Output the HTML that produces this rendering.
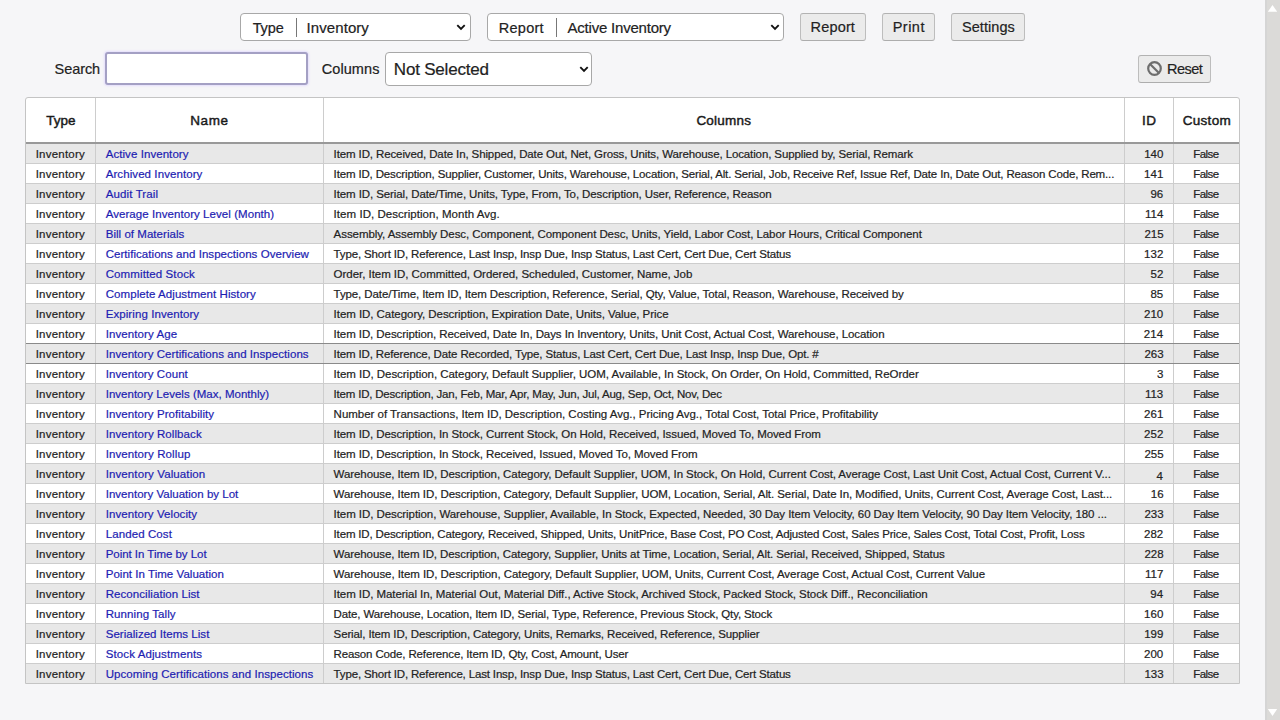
<!DOCTYPE html><html><head><meta charset="utf-8"><style>
*{box-sizing:border-box;margin:0;padding:0}
html,body{width:1280px;height:720px;overflow:hidden;background:#f6f6f8;font-family:"Liberation Sans",sans-serif;color:#222}
.abs{position:absolute}
.ctl{position:absolute;background:#fff;border:1px solid #a8a8a8;border-radius:4px}
.btn{position:absolute;background:#ebebeb;border:1px solid;border-color:#b2b2b2 #bdbdbd #adadad #bdbdbd;border-radius:3px}
.tx{position:absolute;white-space:nowrap;line-height:1;-webkit-text-stroke:0.2px currentColor}
.sb{position:absolute;left:1265px;top:0;width:15px;height:720px;background:#dbdad8;border-left:2px solid #d5d5d5}
.tbl{position:absolute;left:25px;top:97px;width:1215px;height:587px;background:#fff;border:1px solid #c4c4c4;border-radius:3px 3px 0 0;overflow:hidden}
.r{position:absolute;left:0;width:1213px;height:20px;border-bottom:1px solid #cdcdcd}
.g{background:#e8e8e8}
.vl{position:absolute;top:0;width:1px;height:586px;background:#cdcdcd}
</style></head><body>
<div class="ctl" style="left:240px;top:13px;width:231px;height:28px"></div>
<div class="abs" style="left:296px;top:18px;width:1px;height:19px;background:#777"></div>
<svg class="abs" style="left:456px;top:23.6px" width="11" height="7" viewBox="0 0 11 7"><path d="M1.3 1.2 L5 4.9 L8.7 1.2" fill="none" stroke="#111" stroke-width="1.9"/></svg>
<div class="ctl" style="left:487px;top:13px;width:297px;height:28px"></div>
<div class="abs" style="left:556px;top:18px;width:1px;height:19px;background:#777"></div>
<svg class="abs" style="left:769.5px;top:23.6px" width="11" height="7" viewBox="0 0 11 7"><path d="M1.3 1.2 L5 4.9 L8.7 1.2" fill="none" stroke="#111" stroke-width="1.9"/></svg>
<div class="btn" style="left:800px;top:13px;width:66px;height:28px"></div>
<div class="btn" style="left:882px;top:13px;width:53px;height:28px"></div>
<div class="btn" style="left:951px;top:13px;width:74px;height:28px"></div>
<div class="ctl" style="left:105px;top:52.3px;width:202.8px;height:32.9px;border:2px solid #a4a0c4;border-radius:3px;box-shadow:0 0 2px 1px rgba(215,205,255,.6)"></div>
<div class="ctl" style="left:385px;top:52px;width:207px;height:34px"></div>
<svg class="abs" style="left:578.5px;top:65.5px" width="11" height="7" viewBox="0 0 11 7"><path d="M1.3 1.2 L5 4.9 L8.7 1.2" fill="none" stroke="#111" stroke-width="1.9"/></svg>
<div class="btn" style="left:1138px;top:55px;width:73px;height:28px"></div>
<svg class="abs" style="left:1146px;top:60px" width="17" height="17" viewBox="0 0 17 17"><circle cx="8.5" cy="8.5" r="6.3" fill="none" stroke="#6e6e6e" stroke-width="2.2"/><path d="M4 4 L13 13" stroke="#6e6e6e" stroke-width="2.2"/></svg>
<div class="tbl">
<div class="r g" style="top:46px"></div>
<div class="r" style="top:66px"></div>
<div class="r g" style="top:86px"></div>
<div class="r" style="top:106px"></div>
<div class="r g" style="top:126px"></div>
<div class="r" style="top:146px"></div>
<div class="r g" style="top:166px"></div>
<div class="r" style="top:186px"></div>
<div class="r g" style="top:206px"></div>
<div class="r" style="top:226px"></div>
<div class="r g" style="top:246px"></div>
<div class="r" style="top:266px"></div>
<div class="r g" style="top:286px"></div>
<div class="r" style="top:306px"></div>
<div class="r g" style="top:326px"></div>
<div class="r" style="top:346px"></div>
<div class="r g" style="top:366px"></div>
<div class="r" style="top:386px"></div>
<div class="r g" style="top:406px"></div>
<div class="r" style="top:426px"></div>
<div class="r g" style="top:446px"></div>
<div class="r" style="top:466px"></div>
<div class="r g" style="top:486px"></div>
<div class="r" style="top:506px"></div>
<div class="r g" style="top:526px"></div>
<div class="r" style="top:546px"></div>
<div class="r g" style="top:566px"></div>
<div class="vl" style="left:69px"></div>
<div class="vl" style="left:297px"></div>
<div class="vl" style="left:1098px"></div>
<div class="vl" style="left:1147px"></div>
<div class="abs" style="left:0;top:44px;width:1213px;height:2px;background:#999"></div>
<div class="abs" style="left:-1px;top:245px;width:1215px;height:21px;border:1px solid #8a8a8a"></div>
</div>
<div class="tx" id="t_type" style="left:252.66px;top:21.01px;font-size:14.5px;color:#222;letter-spacing:-0.099px;">Type</div>
<div class="tx" id="t_inv" style="left:306.58px;top:20.05px;font-size:15px;color:#222;letter-spacing:0.073px;">Inventory</div>
<div class="tx" id="t_rep" style="left:498.76px;top:21.01px;font-size:14.5px;color:#222;letter-spacing:0.266px;">Report</div>
<div class="tx" id="t_act" style="left:567.45px;top:20.05px;font-size:15px;color:#222;letter-spacing:-0.202px;">Active Inventory</div>
<div class="tx" id="b_rep" style="left:810.61px;top:20.31px;font-size:14.5px;color:#222;letter-spacing:0.151px;">Report</div>
<div class="tx" id="b_pri" style="left:892.68px;top:19.51px;font-size:14.5px;color:#222;letter-spacing:0.487px;">Print</div>
<div class="tx" id="b_set" style="left:961.95px;top:19.91px;font-size:14.5px;color:#222;letter-spacing:0.063px;">Settings</div>
<div class="tx" id="l_sea" style="left:54.58px;top:61.86px;font-size:14.5px;color:#222;letter-spacing:-0.071px;">Search</div>
<div class="tx" id="l_col" style="left:321.67px;top:62.06px;font-size:14.5px;color:#222;letter-spacing:0.098px;">Columns</div>
<div class="tx" id="s_not" style="left:393.82px;top:61.05px;font-size:17px;color:#222;letter-spacing:-0.203px;">Not Selected</div>
<div class="tx" id="b_res" style="left:1167.12px;top:62.01px;font-size:14.5px;color:#222;letter-spacing:-0.539px;">Reset</div>
<div class="tx" id="h_type" style="left:46.24px;top:114.26px;font-size:13.5px;color:#1a1a1a;-webkit-text-stroke:0.45px #1a1a1a;letter-spacing:-0.022px;">Type</div>
<div class="tx" id="h_name" style="left:190.21px;top:114.26px;font-size:13.5px;color:#1a1a1a;-webkit-text-stroke:0.45px #1a1a1a;letter-spacing:0.623px;">Name</div>
<div class="tx" id="h_cols" style="left:696.40px;top:114.26px;font-size:13.5px;color:#1a1a1a;-webkit-text-stroke:0.45px #1a1a1a;letter-spacing:0.223px;">Columns</div>
<div class="tx" id="h_id" style="left:1142.11px;top:114.26px;font-size:13.5px;color:#1a1a1a;-webkit-text-stroke:0.45px #1a1a1a;letter-spacing:0.417px;">ID</div>
<div class="tx" id="h_cus" style="left:1182.72px;top:114.26px;font-size:13.5px;color:#1a1a1a;-webkit-text-stroke:0.45px #1a1a1a;letter-spacing:0.289px;">Custom</div>
<div class="tx" id="r0_t" style="left:35.69px;top:149.36px;font-size:11.5px;color:#222;letter-spacing:0.218px;">Inventory</div>
<div class="tx" id="r0_n" style="left:105.70px;top:149.36px;font-size:11.5px;color:#1d1db2;letter-spacing:0.066px;">Active Inventory</div>
<div class="tx" id="r0_c" style="left:333.60px;top:149.36px;font-size:11.5px;color:#222;letter-spacing:-0.116px;">Item ID, Received, Date In, Shipped, Date Out, Net, Gross, Units, Warehouse, Location, Supplied by, Serial, Remark</div>
<div class="tx" id="r0_i" style="left:1144.14px;top:149.36px;font-size:11.5px;color:#222;">140</div>
<div class="tx" id="r0_f" style="left:1193.24px;top:149.36px;font-size:11.5px;color:#222;letter-spacing:-0.530px;">False</div>
<div class="tx" id="r1_t" style="left:35.69px;top:169.36px;font-size:11.5px;color:#222;letter-spacing:0.218px;">Inventory</div>
<div class="tx" id="r1_n" style="left:105.70px;top:169.36px;font-size:11.5px;color:#1d1db2;letter-spacing:0.083px;">Archived Inventory</div>
<div class="tx" id="r1_c" style="left:333.60px;top:169.36px;font-size:11.5px;color:#222;letter-spacing:-0.150px;">Item ID, Description, Supplier, Customer, Units, Warehouse, Location, Serial, Alt. Serial, Job, Receive Ref, Issue Ref, Date In, Date Out, Reason Code, Rem...</div>
<div class="tx" id="r1_i" style="left:1144.12px;top:169.36px;font-size:11.5px;color:#222;">141</div>
<div class="tx" id="r1_f" style="left:1193.24px;top:169.36px;font-size:11.5px;color:#222;letter-spacing:-0.530px;">False</div>
<div class="tx" id="r2_t" style="left:35.69px;top:189.36px;font-size:11.5px;color:#222;letter-spacing:0.218px;">Inventory</div>
<div class="tx" id="r2_n" style="left:105.70px;top:189.36px;font-size:11.5px;color:#1d1db2;letter-spacing:0.127px;">Audit Trail</div>
<div class="tx" id="r2_c" style="left:333.60px;top:189.36px;font-size:11.5px;color:#222;letter-spacing:-0.098px;">Item ID, Serial, Date/Time, Units, Type, From, To, Description, User, Reference, Reason</div>
<div class="tx" id="r2_i" style="left:1150.48px;top:189.36px;font-size:11.5px;color:#222;">96</div>
<div class="tx" id="r2_f" style="left:1193.24px;top:189.36px;font-size:11.5px;color:#222;letter-spacing:-0.530px;">False</div>
<div class="tx" id="r3_t" style="left:35.69px;top:209.36px;font-size:11.5px;color:#222;letter-spacing:0.218px;">Inventory</div>
<div class="tx" id="r3_n" style="left:105.70px;top:209.36px;font-size:11.5px;color:#1d1db2;letter-spacing:0.061px;">Average Inventory Level (Month)</div>
<div class="tx" id="r3_c" style="left:333.60px;top:209.36px;font-size:11.5px;color:#222;letter-spacing:0.046px;">Item ID, Description, Month Avg.</div>
<div class="tx" id="r3_i" style="left:1145.01px;top:209.36px;font-size:11.5px;color:#222;">114</div>
<div class="tx" id="r3_f" style="left:1193.24px;top:209.36px;font-size:11.5px;color:#222;letter-spacing:-0.530px;">False</div>
<div class="tx" id="r4_t" style="left:35.69px;top:229.36px;font-size:11.5px;color:#222;letter-spacing:0.218px;">Inventory</div>
<div class="tx" id="r4_n" style="left:105.70px;top:229.36px;font-size:11.5px;color:#1d1db2;letter-spacing:0.037px;">Bill of Materials</div>
<div class="tx" id="r4_c" style="left:333.60px;top:229.36px;font-size:11.5px;color:#222;letter-spacing:-0.067px;">Assembly, Assembly Desc, Component, Component Desc, Units, Yield, Labor Cost, Labor Hours, Critical Component</div>
<div class="tx" id="r4_i" style="left:1144.40px;top:229.36px;font-size:11.5px;color:#222;">215</div>
<div class="tx" id="r4_f" style="left:1193.24px;top:229.36px;font-size:11.5px;color:#222;letter-spacing:-0.530px;">False</div>
<div class="tx" id="r5_t" style="left:35.69px;top:249.36px;font-size:11.5px;color:#222;letter-spacing:0.218px;">Inventory</div>
<div class="tx" id="r5_n" style="left:105.70px;top:249.36px;font-size:11.5px;color:#1d1db2;letter-spacing:0.050px;">Certifications and Inspections Overview</div>
<div class="tx" id="r5_c" style="left:333.60px;top:249.36px;font-size:11.5px;color:#222;letter-spacing:-0.156px;">Type, Short ID, Reference, Last Insp, Insp Due, Insp Status, Last Cert, Cert Due, Cert Status</div>
<div class="tx" id="r5_i" style="left:1144.12px;top:249.36px;font-size:11.5px;color:#222;">132</div>
<div class="tx" id="r5_f" style="left:1193.24px;top:249.36px;font-size:11.5px;color:#222;letter-spacing:-0.530px;">False</div>
<div class="tx" id="r6_t" style="left:35.69px;top:269.36px;font-size:11.5px;color:#222;letter-spacing:0.218px;">Inventory</div>
<div class="tx" id="r6_n" style="left:105.70px;top:269.36px;font-size:11.5px;color:#1d1db2;letter-spacing:0.111px;">Committed Stock</div>
<div class="tx" id="r6_c" style="left:333.60px;top:269.36px;font-size:11.5px;color:#222;letter-spacing:-0.037px;">Order, Item ID, Committed, Ordered, Scheduled, Customer, Name, Job</div>
<div class="tx" id="r6_i" style="left:1150.56px;top:269.36px;font-size:11.5px;color:#222;">52</div>
<div class="tx" id="r6_f" style="left:1193.24px;top:269.36px;font-size:11.5px;color:#222;letter-spacing:-0.530px;">False</div>
<div class="tx" id="r7_t" style="left:35.69px;top:289.36px;font-size:11.5px;color:#222;letter-spacing:0.218px;">Inventory</div>
<div class="tx" id="r7_n" style="left:105.70px;top:289.36px;font-size:11.5px;color:#1d1db2;letter-spacing:0.068px;">Complete Adjustment History</div>
<div class="tx" id="r7_c" style="left:333.60px;top:289.36px;font-size:11.5px;color:#222;letter-spacing:-0.102px;">Type, Date/Time, Item ID, Item Description, Reference, Serial, Qty, Value, Total, Reason, Warehouse, Received by</div>
<div class="tx" id="r7_i" style="left:1150.40px;top:289.36px;font-size:11.5px;color:#222;">85</div>
<div class="tx" id="r7_f" style="left:1193.24px;top:289.36px;font-size:11.5px;color:#222;letter-spacing:-0.530px;">False</div>
<div class="tx" id="r8_t" style="left:35.69px;top:309.36px;font-size:11.5px;color:#222;letter-spacing:0.218px;">Inventory</div>
<div class="tx" id="r8_n" style="left:105.70px;top:309.36px;font-size:11.5px;color:#1d1db2;letter-spacing:0.078px;">Expiring Inventory</div>
<div class="tx" id="r8_c" style="left:333.60px;top:309.36px;font-size:11.5px;color:#222;letter-spacing:-0.050px;">Item ID, Category, Description, Expiration Date, Units, Value, Price</div>
<div class="tx" id="r8_i" style="left:1144.08px;top:309.36px;font-size:11.5px;color:#222;">210</div>
<div class="tx" id="r8_f" style="left:1193.24px;top:309.36px;font-size:11.5px;color:#222;letter-spacing:-0.530px;">False</div>
<div class="tx" id="r9_t" style="left:35.69px;top:329.36px;font-size:11.5px;color:#222;letter-spacing:0.218px;">Inventory</div>
<div class="tx" id="r9_n" style="left:105.70px;top:329.36px;font-size:11.5px;color:#1d1db2;letter-spacing:0.101px;">Inventory Age</div>
<div class="tx" id="r9_c" style="left:333.60px;top:329.36px;font-size:11.5px;color:#222;letter-spacing:-0.076px;">Item ID, Description, Received, Date In, Days In Inventory, Units, Unit Cost, Actual Cost, Warehouse, Location</div>
<div class="tx" id="r9_i" style="left:1143.86px;top:329.36px;font-size:11.5px;color:#222;">214</div>
<div class="tx" id="r9_f" style="left:1193.24px;top:329.36px;font-size:11.5px;color:#222;letter-spacing:-0.530px;">False</div>
<div class="tx" id="r10_t" style="left:35.69px;top:349.36px;font-size:11.5px;color:#222;letter-spacing:0.218px;">Inventory</div>
<div class="tx" id="r10_n" style="left:105.70px;top:349.36px;font-size:11.5px;color:#1d1db2;letter-spacing:0.056px;">Inventory Certifications and Inspections</div>
<div class="tx" id="r10_c" style="left:333.60px;top:349.36px;font-size:11.5px;color:#222;letter-spacing:-0.144px;">Item ID, Reference, Date Recorded, Type, Status, Last Cert, Cert Due, Last Insp, Insp Due, Opt. #</div>
<div class="tx" id="r10_i" style="left:1144.47px;top:349.36px;font-size:11.5px;color:#222;">263</div>
<div class="tx" id="r10_f" style="left:1193.24px;top:349.36px;font-size:11.5px;color:#222;letter-spacing:-0.530px;">False</div>
<div class="tx" id="r11_t" style="left:35.69px;top:369.36px;font-size:11.5px;color:#222;letter-spacing:0.218px;">Inventory</div>
<div class="tx" id="r11_n" style="left:105.70px;top:369.36px;font-size:11.5px;color:#1d1db2;letter-spacing:0.065px;">Inventory Count</div>
<div class="tx" id="r11_c" style="left:333.60px;top:369.36px;font-size:11.5px;color:#222;letter-spacing:-0.033px;">Item ID, Description, Category, Default Supplier, UOM, Available, In Stock, On Order, On Hold, Committed, ReOrder</div>
<div class="tx" id="r11_i" style="left:1157.02px;top:369.36px;font-size:11.5px;color:#222;">3</div>
<div class="tx" id="r11_f" style="left:1193.24px;top:369.36px;font-size:11.5px;color:#222;letter-spacing:-0.530px;">False</div>
<div class="tx" id="r12_t" style="left:35.69px;top:389.36px;font-size:11.5px;color:#222;letter-spacing:0.218px;">Inventory</div>
<div class="tx" id="r12_n" style="left:105.70px;top:389.36px;font-size:11.5px;color:#1d1db2;letter-spacing:0.016px;">Inventory Levels (Max, Monthly)</div>
<div class="tx" id="r12_c" style="left:333.60px;top:389.36px;font-size:11.5px;color:#222;letter-spacing:-0.200px;">Item ID, Description, Jan, Feb, Mar, Apr, May, Jun, Jul, Aug, Sep, Oct, Nov, Dec</div>
<div class="tx" id="r12_i" style="left:1144.90px;top:389.36px;font-size:11.5px;color:#222;">113</div>
<div class="tx" id="r12_f" style="left:1193.24px;top:389.36px;font-size:11.5px;color:#222;letter-spacing:-0.530px;">False</div>
<div class="tx" id="r13_t" style="left:35.69px;top:409.36px;font-size:11.5px;color:#222;letter-spacing:0.218px;">Inventory</div>
<div class="tx" id="r13_n" style="left:105.70px;top:409.36px;font-size:11.5px;color:#1d1db2;letter-spacing:0.077px;">Inventory Profitability</div>
<div class="tx" id="r13_c" style="left:333.60px;top:409.36px;font-size:11.5px;color:#222;letter-spacing:-0.023px;">Number of Transactions, Item ID, Description, Costing Avg., Pricing Avg., Total Cost, Total Price, Profitability</div>
<div class="tx" id="r13_i" style="left:1144.11px;top:409.36px;font-size:11.5px;color:#222;">261</div>
<div class="tx" id="r13_f" style="left:1193.24px;top:409.36px;font-size:11.5px;color:#222;letter-spacing:-0.530px;">False</div>
<div class="tx" id="r14_t" style="left:35.69px;top:429.36px;font-size:11.5px;color:#222;letter-spacing:0.218px;">Inventory</div>
<div class="tx" id="r14_n" style="left:105.70px;top:429.36px;font-size:11.5px;color:#1d1db2;letter-spacing:0.080px;">Inventory Rollback</div>
<div class="tx" id="r14_c" style="left:333.60px;top:429.36px;font-size:11.5px;color:#222;letter-spacing:-0.091px;">Item ID, Description, In Stock, Current Stock, On Hold, Received, Issued, Moved To, Moved From</div>
<div class="tx" id="r14_i" style="left:1144.10px;top:429.36px;font-size:11.5px;color:#222;">252</div>
<div class="tx" id="r14_f" style="left:1193.24px;top:429.36px;font-size:11.5px;color:#222;letter-spacing:-0.530px;">False</div>
<div class="tx" id="r15_t" style="left:35.69px;top:449.36px;font-size:11.5px;color:#222;letter-spacing:0.218px;">Inventory</div>
<div class="tx" id="r15_n" style="left:105.70px;top:449.36px;font-size:11.5px;color:#1d1db2;letter-spacing:0.101px;">Inventory Rollup</div>
<div class="tx" id="r15_c" style="left:333.60px;top:449.36px;font-size:11.5px;color:#222;letter-spacing:-0.093px;">Item ID, Description, In Stock, Received, Issued, Moved To, Moved From</div>
<div class="tx" id="r15_i" style="left:1144.39px;top:449.36px;font-size:11.5px;color:#222;">255</div>
<div class="tx" id="r15_f" style="left:1193.24px;top:449.36px;font-size:11.5px;color:#222;letter-spacing:-0.530px;">False</div>
<div class="tx" id="r16_t" style="left:35.69px;top:469.36px;font-size:11.5px;color:#222;letter-spacing:0.218px;">Inventory</div>
<div class="tx" id="r16_n" style="left:105.70px;top:469.36px;font-size:11.5px;color:#1d1db2;letter-spacing:0.107px;">Inventory Valuation</div>
<div class="tx" id="r16_c" style="left:333.60px;top:469.36px;font-size:11.5px;color:#222;letter-spacing:-0.079px;">Warehouse, Item ID, Description, Category, Default Supplier, UOM, In Stock, On Hold, Current Cost, Average Cost, Last Unit Cost, Actual Cost, Current V...</div>
<div class="tx" id="r16_i" style="left:1156.59px;top:471.36px;font-size:11.5px;color:#222;">4</div>
<div class="tx" id="r16_f" style="left:1193.24px;top:469.36px;font-size:11.5px;color:#222;letter-spacing:-0.530px;">False</div>
<div class="tx" id="r17_t" style="left:35.69px;top:489.36px;font-size:11.5px;color:#222;letter-spacing:0.218px;">Inventory</div>
<div class="tx" id="r17_n" style="left:105.70px;top:489.36px;font-size:11.5px;color:#1d1db2;letter-spacing:0.020px;">Inventory Valuation by Lot</div>
<div class="tx" id="r17_c" style="left:333.60px;top:489.36px;font-size:11.5px;color:#222;letter-spacing:-0.071px;">Warehouse, Item ID, Description, Category, Default Supplier, UOM, Location, Serial, Alt. Serial, Date In, Modified, Units, Current Cost, Average Cost, Last...</div>
<div class="tx" id="r17_i" style="left:1150.81px;top:489.36px;font-size:11.5px;color:#222;">16</div>
<div class="tx" id="r17_f" style="left:1193.24px;top:489.36px;font-size:11.5px;color:#222;letter-spacing:-0.530px;">False</div>
<div class="tx" id="r18_t" style="left:35.69px;top:509.36px;font-size:11.5px;color:#222;letter-spacing:0.218px;">Inventory</div>
<div class="tx" id="r18_n" style="left:105.70px;top:509.36px;font-size:11.5px;color:#1d1db2;letter-spacing:0.074px;">Inventory Velocity</div>
<div class="tx" id="r18_c" style="left:333.60px;top:509.36px;font-size:11.5px;color:#222;letter-spacing:-0.071px;">Item ID, Description, Warehouse, Supplier, Available, In Stock, Expected, Needed, 30 Day Item Velocity, 60 Day Item Velocity, 90 Day Item Velocity, 180 ...</div>
<div class="tx" id="r18_i" style="left:1144.47px;top:509.36px;font-size:11.5px;color:#222;">233</div>
<div class="tx" id="r18_f" style="left:1193.24px;top:509.36px;font-size:11.5px;color:#222;letter-spacing:-0.530px;">False</div>
<div class="tx" id="r19_t" style="left:35.69px;top:529.36px;font-size:11.5px;color:#222;letter-spacing:0.218px;">Inventory</div>
<div class="tx" id="r19_n" style="left:105.70px;top:529.36px;font-size:11.5px;color:#1d1db2;letter-spacing:0.101px;">Landed Cost</div>
<div class="tx" id="r19_c" style="left:333.60px;top:529.36px;font-size:11.5px;color:#222;letter-spacing:-0.165px;">Item ID, Description, Category, Received, Shipped, Units, UnitPrice, Base Cost, PO Cost, Adjusted Cost, Sales Price, Sales Cost, Total Cost, Profit, Loss</div>
<div class="tx" id="r19_i" style="left:1144.09px;top:529.36px;font-size:11.5px;color:#222;">282</div>
<div class="tx" id="r19_f" style="left:1193.24px;top:529.36px;font-size:11.5px;color:#222;letter-spacing:-0.530px;">False</div>
<div class="tx" id="r20_t" style="left:35.69px;top:549.36px;font-size:11.5px;color:#222;letter-spacing:0.218px;">Inventory</div>
<div class="tx" id="r20_n" style="left:105.70px;top:549.36px;font-size:11.5px;color:#1d1db2;letter-spacing:-0.039px;">Point In Time by Lot</div>
<div class="tx" id="r20_c" style="left:333.60px;top:549.36px;font-size:11.5px;color:#222;letter-spacing:-0.088px;">Warehouse, Item ID, Description, Category, Supplier, Units at Time, Location, Serial, Alt. Serial, Received, Shipped, Status</div>
<div class="tx" id="r20_i" style="left:1144.44px;top:549.36px;font-size:11.5px;color:#222;">228</div>
<div class="tx" id="r20_f" style="left:1193.24px;top:549.36px;font-size:11.5px;color:#222;letter-spacing:-0.530px;">False</div>
<div class="tx" id="r21_t" style="left:35.69px;top:569.36px;font-size:11.5px;color:#222;letter-spacing:0.218px;">Inventory</div>
<div class="tx" id="r21_n" style="left:105.70px;top:569.36px;font-size:11.5px;color:#1d1db2;letter-spacing:0.039px;">Point In Time Valuation</div>
<div class="tx" id="r21_c" style="left:333.60px;top:569.36px;font-size:11.5px;color:#222;letter-spacing:-0.061px;">Warehouse, Item ID, Description, Category, Default Supplier, UOM, Units, Current Cost, Average Cost, Actual Cost, Current Value</div>
<div class="tx" id="r21_i" style="left:1145.02px;top:569.36px;font-size:11.5px;color:#222;">117</div>
<div class="tx" id="r21_f" style="left:1193.24px;top:569.36px;font-size:11.5px;color:#222;letter-spacing:-0.530px;">False</div>
<div class="tx" id="r22_t" style="left:35.69px;top:589.36px;font-size:11.5px;color:#222;letter-spacing:0.218px;">Inventory</div>
<div class="tx" id="r22_n" style="left:105.70px;top:589.36px;font-size:11.5px;color:#1d1db2;letter-spacing:0.066px;">Reconciliation List</div>
<div class="tx" id="r22_c" style="left:333.60px;top:589.36px;font-size:11.5px;color:#222;letter-spacing:-0.062px;">Item ID, Material In, Material Out, Material Diff., Active Stock, Archived Stock, Packed Stock, Stock Diff., Reconciliation</div>
<div class="tx" id="r22_i" style="left:1150.24px;top:589.36px;font-size:11.5px;color:#222;">94</div>
<div class="tx" id="r22_f" style="left:1193.24px;top:589.36px;font-size:11.5px;color:#222;letter-spacing:-0.530px;">False</div>
<div class="tx" id="r23_t" style="left:35.69px;top:609.36px;font-size:11.5px;color:#222;letter-spacing:0.218px;">Inventory</div>
<div class="tx" id="r23_n" style="left:105.70px;top:609.36px;font-size:11.5px;color:#1d1db2;letter-spacing:0.090px;">Running Tally</div>
<div class="tx" id="r23_c" style="left:333.60px;top:609.36px;font-size:11.5px;color:#222;letter-spacing:-0.137px;">Date, Warehouse, Location, Item ID, Serial, Type, Reference, Previous Stock, Qty, Stock</div>
<div class="tx" id="r23_i" style="left:1144.11px;top:609.36px;font-size:11.5px;color:#222;">160</div>
<div class="tx" id="r23_f" style="left:1193.24px;top:609.36px;font-size:11.5px;color:#222;letter-spacing:-0.530px;">False</div>
<div class="tx" id="r24_t" style="left:35.69px;top:629.36px;font-size:11.5px;color:#222;letter-spacing:0.218px;">Inventory</div>
<div class="tx" id="r24_n" style="left:105.70px;top:629.36px;font-size:11.5px;color:#1d1db2;letter-spacing:0.037px;">Serialized Items List</div>
<div class="tx" id="r24_c" style="left:333.60px;top:629.36px;font-size:11.5px;color:#222;letter-spacing:-0.124px;">Serial, Item ID, Description, Category, Units, Remarks, Received, Reference, Supplier</div>
<div class="tx" id="r24_i" style="left:1144.18px;top:629.36px;font-size:11.5px;color:#222;">199</div>
<div class="tx" id="r24_f" style="left:1193.24px;top:629.36px;font-size:11.5px;color:#222;letter-spacing:-0.530px;">False</div>
<div class="tx" id="r25_t" style="left:35.69px;top:649.36px;font-size:11.5px;color:#222;letter-spacing:0.218px;">Inventory</div>
<div class="tx" id="r25_n" style="left:105.70px;top:649.36px;font-size:11.5px;color:#1d1db2;letter-spacing:0.109px;">Stock Adjustments</div>
<div class="tx" id="r25_c" style="left:333.60px;top:649.36px;font-size:11.5px;color:#222;letter-spacing:-0.145px;">Reason Code, Reference, Item ID, Qty, Cost, Amount, User</div>
<div class="tx" id="r25_i" style="left:1144.07px;top:649.36px;font-size:11.5px;color:#222;">200</div>
<div class="tx" id="r25_f" style="left:1193.24px;top:649.36px;font-size:11.5px;color:#222;letter-spacing:-0.530px;">False</div>
<div class="tx" id="r26_t" style="left:35.69px;top:669.36px;font-size:11.5px;color:#222;letter-spacing:0.218px;">Inventory</div>
<div class="tx" id="r26_n" style="left:105.70px;top:669.36px;font-size:11.5px;color:#1d1db2;letter-spacing:0.063px;">Upcoming Certifications and Inspections</div>
<div class="tx" id="r26_c" style="left:333.60px;top:669.36px;font-size:11.5px;color:#222;letter-spacing:-0.157px;">Type, Short ID, Reference, Last Insp, Insp Due, Insp Status, Last Cert, Cert Due, Cert Status</div>
<div class="tx" id="r26_i" style="left:1144.47px;top:669.36px;font-size:11.5px;color:#222;">133</div>
<div class="tx" id="r26_f" style="left:1193.24px;top:669.36px;font-size:11.5px;color:#222;letter-spacing:-0.530px;">False</div>
<div class="sb"></div>
<svg class="abs" style="left:1265px;top:0" width="15" height="15" viewBox="0 0 15 15"><path d="M2.8 11.7 L7.5 5 L12.2 11.7 Z" fill="#fff"/></svg>
<svg class="abs" style="left:1265px;top:705px" width="15" height="15" viewBox="0 0 15 15"><path d="M2.8 4 L7.5 11 L12.2 4 Z" fill="#fff"/></svg>
</body></html>
